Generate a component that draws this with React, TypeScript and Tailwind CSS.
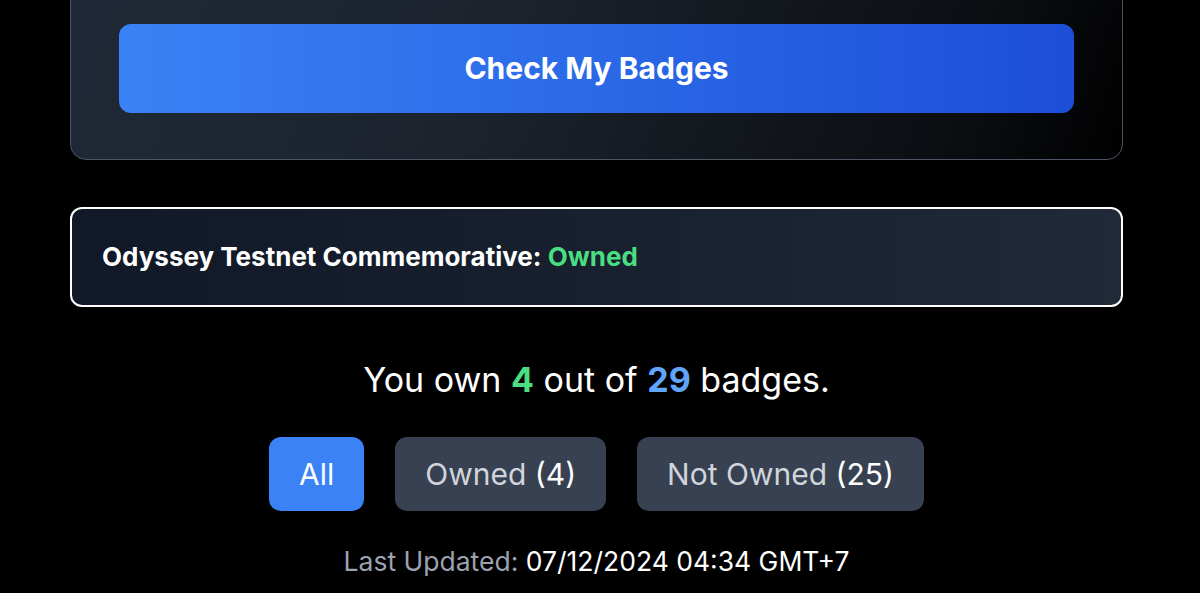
export default function App() {
  return (
    <div className="min-h-screen bg-black text-white font-['Inter',sans-serif] pl-[70px] pr-[77px] overflow-hidden">
      <div className="-mt-[25px] rounded-2xl border border-[#4b5563] bg-[linear-gradient(110deg,#1f2937_0%,#1c232d_40%,#0b0d11_85%,#000_100%)] px-12 pt-12 pb-[46px]">
        <button className="w-full h-[89px] rounded-xl bg-gradient-to-r from-[#3b82f6] to-[#1d4ed8] text-[30px] font-bold text-white">
          Check My Badges
        </button>
      </div>

      <div className="mt-[47px] rounded-xl border-2 border-white bg-gradient-to-r from-[#111827] to-[#1f2937] px-[30px] py-8">
        <p className="text-[26px] font-bold leading-8">
          Odyssey Testnet Commemorative: <span className="text-[#4ade80]">Owned</span>
        </p>
      </div>

      <p className="mt-[53px] text-center text-[34px] leading-10">
        You own <span className="font-bold text-[#4ade80]">4</span> out of{" "}
        <span className="font-bold text-[#60a5fa]">29</span> badges.
      </p>

      <div className="mt-[37px] flex justify-center gap-[31px]">
        <button className="h-[74px] rounded-xl bg-[#3b82f6] px-[30px] text-[30px] text-white">All</button>
        <button className="h-[74px] rounded-xl bg-[#374151] px-[30px] text-[30px] text-[#d1d5db]">
          Owned <span className="text-white">(4)</span>
        </button>
        <button className="h-[74px] rounded-xl bg-[#374151] px-[30px] text-[30px] text-[#d1d5db]">
          Not Owned <span className="text-white">(25)</span>
        </button>
      </div>

      <p className="mt-[34px] text-center text-[26.5px] leading-8 text-[#9ca3af]">
        Last Updated: <span className="text-white">07/12/2024 04:34 GMT+7</span>
      </p>
    </div>
  )
}
